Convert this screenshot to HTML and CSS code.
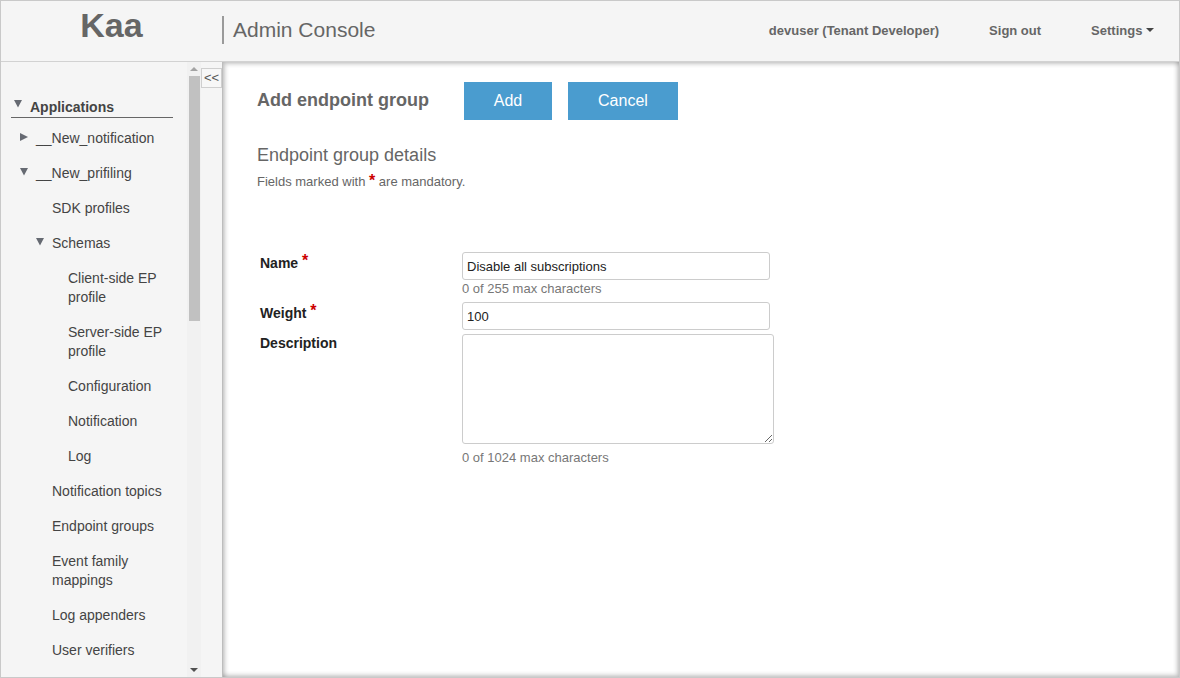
FILE: index.html
```html
<!DOCTYPE html>
<html lang="en">
<head>
<meta charset="utf-8">
<title>Kaa Admin Console</title>
<link rel="stylesheet" href="styles.css">
</head>
<body>
<div class="frame">
  <header class="topbar">
    <div class="logo">Kaa</div>
    <div class="divider"></div>
    <div class="app-title">Admin Console</div>
    <nav class="nav">
      <span class="nav-item">devuser (Tenant Developer)</span>
      <span class="nav-item">Sign out</span>
      <span class="nav-item">Settings <span class="caret"></span></span>
    </nav>
  </header>
  <div class="main">
    <aside class="sidebar">
      <div class="tree-col">
        <div class="tree">
          <div class="tree-head">
            <svg class="arrow-head" width="8" height="8" viewBox="0 0 8 8"><polygon points="0,0 8,0 4,7.5" fill="#666a72"/></svg>
            <span>Applications</span>
          </div>
          <ul class="tree-list">
            <li class="node l1"><span class="tw"><svg width="8" height="8" viewBox="0 0 8 8"><polygon points="0,0 8,4 0,8" fill="#666a72"/></svg></span><span class="label">__New_notification</span></li>
            <li class="node l1"><span class="tw"><svg width="8" height="8" viewBox="0 0 8 8"><polygon points="0,0 8,0 4,7.5" fill="#666a72"/></svg></span><span class="label">__New_prifiling</span></li>
            <li class="node l2"><span class="tw"></span><span class="label">SDK profiles</span></li>
            <li class="node l2"><span class="tw"><svg width="8" height="8" viewBox="0 0 8 8"><polygon points="0,0 8,0 4,7.5" fill="#666a72"/></svg></span><span class="label">Schemas</span></li>
            <li class="node l3"><span class="tw"></span><span class="label">Client-side EP profile</span></li>
            <li class="node l3"><span class="tw"></span><span class="label">Server-side EP profile</span></li>
            <li class="node l3"><span class="tw"></span><span class="label">Configuration</span></li>
            <li class="node l3"><span class="tw"></span><span class="label">Notification</span></li>
            <li class="node l3"><span class="tw"></span><span class="label">Log</span></li>
            <li class="node l2"><span class="tw"></span><span class="label">Notification topics</span></li>
            <li class="node l2"><span class="tw"></span><span class="label">Endpoint groups</span></li>
            <li class="node l2"><span class="tw"></span><span class="label">Event family mappings</span></li>
            <li class="node l2"><span class="tw"></span><span class="label">Log appenders</span></li>
            <li class="node l2"><span class="tw"></span><span class="label">User verifiers</span></li>
          </ul>
        </div>
      </div>
      <div class="scrollbar">
        <span class="sb-btn"><span class="sb-up"></span></span>
        <span class="sb-thumb"></span>
        <span class="sb-track"></span>
        <span class="sb-btn"><span class="sb-down"></span></span>
      </div>
      <div class="collapse-col">
        <button class="collapse">&lt;&lt;</button>
      </div>
    </aside>
    <section class="content">
      <div class="title-row">
        <h2 class="page-title">Add endpoint group</h2>
        <button class="btn btn-add">Add</button>
        <button class="btn btn-cancel">Cancel</button>
      </div>
      <h3 class="section-title">Endpoint group details</h3>
      <p class="mandatory">Fields marked with <span class="req">*</span> are mandatory.</p>
      <div class="form">
        <div class="flabel">Name <span class="req">*</span></div>
        <div class="field gap5">
          <input class="input" type="text" value="Disable all subscriptions">
          <div class="help">0 of 255 max characters</div>
        </div>
        <div class="flabel">Weight <span class="req">*</span></div>
        <div class="field gap4">
          <input class="input" type="text" value="100">
        </div>
        <div class="flabel flabel-desc">Description</div>
        <div class="field">
          <textarea class="textarea"></textarea>
          <div class="help help-ta">0 of 1024 max characters</div>
        </div>
      </div>
    </section>
  </div>
</div>
</body>
</html>
```
FILE: styles.css
```css
html, body {
  margin: 0;
  padding: 0;
  background: #fff;
}
body {
  font-family: "Liberation Sans", Arial, sans-serif;
}
.frame {
  width: 1180px;
  height: 678px;
  box-sizing: border-box;
  border: 1px solid #c9c9c9;
  display: flex;
  flex-direction: column;
  overflow: hidden;
}

/* header */
.topbar {
  height: 60px;
  flex: none;
  background: #f5f5f5;
  border-bottom: 1px solid #d2d2d2;
  display: flex;
  align-items: flex-start;
}
.logo {
  width: 221px;
  text-align: center;
  font-size: 34px;
  line-height: 34px;
  font-weight: bold;
  color: #666;
  padding-top: 7px;
}
.divider {
  width: 2px;
  height: 28px;
  background: #9a9a9a;
  margin-top: 15px;
}
.app-title {
  margin-left: 9px;
  font-size: 21px;
  line-height: 24px;
  padding-top: 17px;
  color: #666;
}
.nav {
  margin-left: auto;
  display: flex;
  padding-top: 22px;
}
.nav-item {
  padding: 0 25px;
  font-size: 13px;
  line-height: 16px;
  font-weight: bold;
  color: #666;
  white-space: nowrap;
}
.caret {
  display: inline-block;
  width: 0;
  height: 0;
  border-top: 4px solid #444;
  border-left: 4px solid transparent;
  border-right: 4px solid transparent;
  vertical-align: 3px;
}

/* main */
.main {
  flex: 1;
  display: flex;
  min-height: 0;
}
.sidebar {
  width: 221px;
  flex: none;
  display: flex;
  background: #f5f5f5;
}
.tree-col {
  width: 186px;
  flex: none;
  overflow: hidden;
}
.tree {
  margin-left: 10px;
  width: 162px;
  padding-top: 36px;
}
.tree-head {
  display: flex;
  align-items: flex-start;
  font-size: 14px;
  line-height: 19px;
  font-weight: bold;
  color: #444;
  border-bottom: 1px solid #666;
}
.arrow-head {
  margin: 2px 8px 0 3px;
  flex: none;
}
.tree-list {
  list-style: none;
  margin: 3px 0 0;
  padding: 0;
}
.node {
  display: flex;
  align-items: flex-start;
  padding: 8px 0;
  font-size: 14px;
  line-height: 19px;
  color: #444;
}
.node .tw {
  width: 16px;
  flex: none;
  padding-top: 4px;
  height: 8px;
}
.node .tw svg {
  display: block;
}
.node .label {
  flex: 1;
  min-width: 0;
}
.l1 { padding-left: 9px; }
.l2 { padding-left: 25px; }
.l3 { padding-left: 41px; }

/* fake scrollbar */
.scrollbar {
  width: 14px;
  flex: none;
  background: #f1f1f1;
  display: flex;
  flex-direction: column;
  align-items: center;
}
.sb-btn {
  height: 14px;
  width: 100%;
  flex: none;
  display: flex;
  align-items: center;
  justify-content: center;
}
.sb-up {
  width: 0;
  height: 0;
  border-bottom: 4px solid #a3a3a3;
  border-left: 4px solid transparent;
  border-right: 4px solid transparent;
}
.sb-down {
  width: 0;
  height: 0;
  border-top: 4px solid #505050;
  border-left: 4px solid transparent;
  border-right: 4px solid transparent;
}
.sb-thumb {
  width: 11px;
  height: 245px;
  flex: none;
  background: #c1c1c1;
}
.sb-track {
  flex: 1;
}
.collapse-col {
  width: 21px;
  flex: none;
}
.collapse {
  display: block;
  margin-top: 6px;
  width: 21px;
  height: 20px;
  box-sizing: border-box;
  border: 1px solid #cfcfcf;
  background: #f7f7f7;
  padding: 0;
  font-family: "Liberation Sans", Arial, sans-serif;
  font-size: 13px;
  line-height: 16px;
  color: #555;
}

/* content */
.content {
  flex: 1;
  min-width: 0;
  background: #fff;
  border-left: 1px solid #bdbdbd;
  box-shadow: inset 2px 2px 4px rgba(0, 0, 0, 0.22), inset -2px -2px 4px rgba(0, 0, 0, 0.22);
  padding: 20px 0 0 34px;
}
.title-row {
  display: flex;
  align-items: flex-start;
}
.page-title {
  margin: 7px 35px 0 0;
  font-size: 18px;
  line-height: 22px;
  font-weight: bold;
  color: #666;
}
.btn {
  height: 38px;
  border: 0;
  padding: 0;
  background: #4a9ccf;
  color: #fff;
  font-family: "Liberation Sans", Arial, sans-serif;
  font-size: 16px;
}
.btn-add { width: 88px; }
.btn-cancel { width: 110px; margin-left: 16px; }
.section-title {
  margin: 24px 0 0;
  font-size: 18px;
  line-height: 22px;
  font-weight: normal;
  color: #666;
}
.mandatory {
  margin: 8px 0 0;
  font-size: 13px;
  line-height: 16px;
  color: #666;
}
.req {
  color: #cc0000;
  font-weight: bold;
  font-size: 16px;
  line-height: 0;
}
.form {
  margin: 62px 0 0 3px;
  display: grid;
  grid-template-columns: 202px auto;
  align-items: start;
}
.flabel {
  font-size: 14px;
  line-height: 16px;
  font-weight: bold;
  color: #222;
  padding-top: 3px;
}
.flabel .req {
  vertical-align: 2px;
}
.flabel-desc {
  padding-top: 1px;
}
.field.gap5 { margin-bottom: 5px; }
.field.gap4 { margin-bottom: 4px; }
.input {
  display: block;
  box-sizing: border-box;
  width: 308px;
  height: 28px;
  margin: 0;
  border: 1px solid #ccc;
  border-radius: 3px;
  padding: 0 4px;
  font-family: "Liberation Sans", Arial, sans-serif;
  font-size: 13px;
  color: #222;
  background: #fff;
  outline: none;
}
.textarea {
  display: block;
  box-sizing: border-box;
  width: 312px;
  height: 110px;
  margin: 0;
  border: 1px solid #ccc;
  border-radius: 3px;
  padding: 4px;
  font-family: "Liberation Sans", Arial, sans-serif;
  font-size: 13px;
  background: #fff;
  resize: both;
}
.help {
  margin-top: 1px;
  font-size: 13px;
  line-height: 16px;
  color: #777;
}
.help-ta {
  margin-top: 6px;
}
```
